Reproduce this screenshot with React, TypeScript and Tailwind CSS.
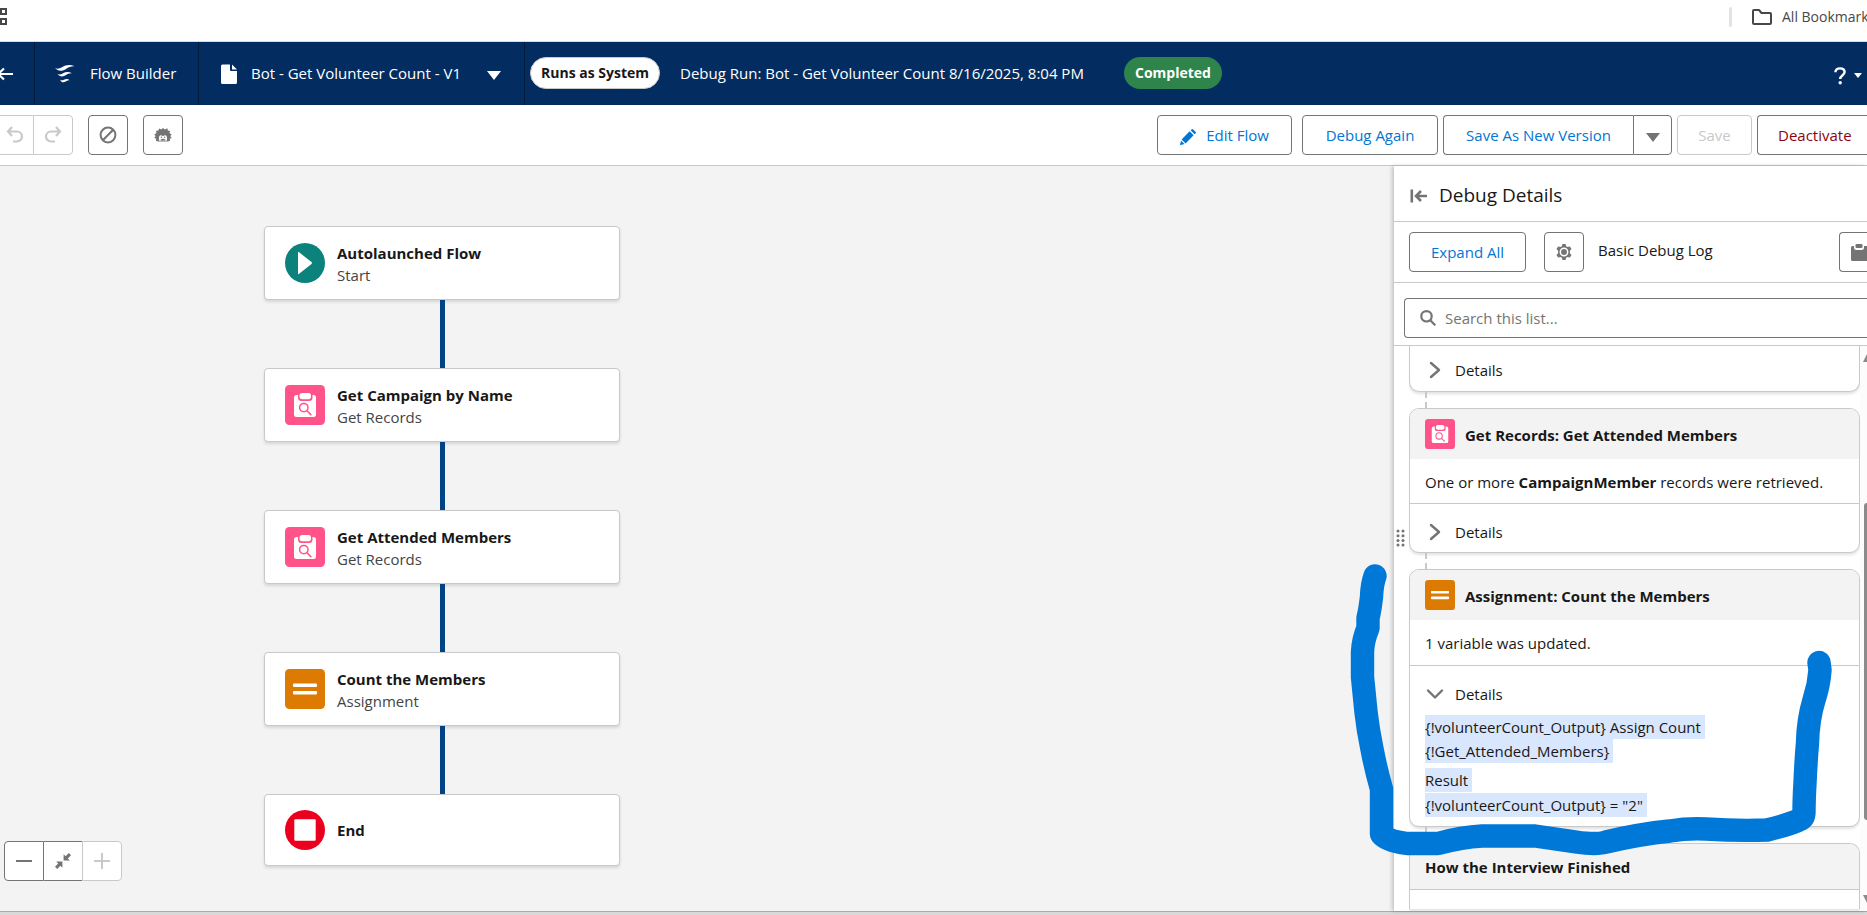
import type { ReactNode } from "react";

function SearchClipboard({ className }: { className: string }) {
  return (
    <svg viewBox="0 0 40 40" className={className} aria-hidden="true">
      <rect width="40" height="40" rx="4.5" fill="#ff538a" />
      <path d="M12 10h1v2.500a3.500 3.500 0 0 0 3.500 3.500h7.500a3.500 3.500 0 0 0 3.500-3.500V10h1a2.500 2.500 0 0 1 2.500 2.500v17a2.500 2.500 0 0 1-2.500 2.500h-17A2.500 2.500 0 0 1 9 29.500v-17A2.500 2.500 0 0 1 11.500 10z" fill="#fff" />
      <rect x="14.500" y="8" width="11.500" height="6.200" rx="2.600" fill="#fff" />
      <circle cx="18.800" cy="22.600" r="4.200" fill="none" stroke="#ff538a" strokeWidth="1.500" />
      <path d="M22 25.800l3.800 3.800" stroke="#ff538a" strokeWidth="1.600" strokeLinecap="round" />
    </svg>
  );
}

function AssignIcon({ className }: { className: string }) {
  return (
    <svg viewBox="0 0 40 40" className={className} aria-hidden="true">
      <rect width="40" height="40" rx="4.500" fill="#dd7a01" />
      <rect x="8" y="14.500" width="24" height="3.500" rx="1" fill="#fff" />
      <rect x="8" y="22" width="24" height="3.500" rx="1" fill="#fff" />
    </svg>
  );
}

function StartIcon() {
  return (
    <svg viewBox="0 0 40 40" className="size-10" aria-hidden="true">
      <circle cx="20" cy="20" r="20" fill="#0b827c" />
      <path d="M13 9.500q0-1 .8-.4l12.700 10q.9.900 0 1.800l-12.700 10q-.8.600-.8-.4z" fill="#fff" />
    </svg>
  );
}

function EndIcon() {
  return (
    <svg viewBox="0 0 40 40" className="size-10" aria-hidden="true">
      <circle cx="20" cy="20" r="20" fill="#ea001e" />
      <rect x="9.300" y="9.300" width="21.400" height="21.400" rx="1" fill="#fff" />
    </svg>
  );
}

function Chevron({ open }: { open?: boolean }) {
  return (
    <svg viewBox="0 0 18 18" className="size-[18px] shrink-0" fill="none" stroke="#747474" strokeWidth="2.400" strokeLinecap="round" strokeLinejoin="round" aria-hidden="true">
      <path d={open ? "M2 5.500l7 7 7-7" : "M5 2l8 7-8 7"} />
    </svg>
  );
}

function Node({ icon, title, sub, last }: { icon: ReactNode; title: string; sub?: string; last?: boolean }) {
  return (
    <>
      <div className={`flex w-[356px] items-center gap-3 rounded border border-[#c9c9c9] bg-white pl-5 shadow-[0_2px_3px_rgba(0,0,0,0.12)] ${last ? "h-[72px]" : "h-[74px]"}`}>
        {icon}
        <div className={`leading-[22px] ${last ? "" : "pt-0.5"}`}>
          <div className="font-bold text-[#181818]">{title}</div>
          {sub && <div className="text-[#444]">{sub}</div>}
        </div>
      </div>
      {!last && <div className="h-[68px] w-[5px] bg-[#014486]" />}
    </>
  );
}

const btn = "flex h-10 shrink-0 items-center justify-center border border-[#747474] bg-white whitespace-nowrap";

function Dash() {
  return <div className="ml-4 h-4 w-0 shrink-0 border-l-2 border-dashed border-[#c9c9c9]" />;
}

function Details({ open, compact }: { open?: boolean; compact?: boolean }) {
  return (
    <button type="button" aria-expanded={!!open} className={`flex w-full items-center gap-[11px] pl-4 text-left ${compact ? "h-12" : "h-12 pt-2"}`}>
      <Chevron open={open} />
      <span>Details</span>
    </button>
  );
}

const card = "shrink-0 overflow-hidden border border-[#c9c9c9] bg-white shadow-[0_2px_3px_rgba(0,0,0,0.12)]";
const mark = "bg-[#d8e6fe] box-decoration-clone py-0.5 pr-1";

export default function App() {
  return (
    <div className="flex h-screen flex-col overflow-hidden bg-white font-['Open_Sans','Segoe_UI',sans-serif] text-[15px] text-[#181818]">
      <div className="flex h-[42px] shrink-0 items-center justify-between border-b border-[#d3e0da] pb-2">
        <svg viewBox="0 0 8 18" className="h-[18px] w-2" fill="none" stroke="#474747" strokeWidth="2" aria-label="Apps">
          <rect x="1" y="1" width="5" height="5" />
          <rect x="1" y="11" width="5" height="5" />
        </svg>
        <div className="flex items-center overflow-hidden text-[14px] text-[#474747]">
          <div className="mr-5 h-5 w-[3px] rounded bg-[#e3e3e3]" />
          <svg viewBox="0 0 20 16" className="mr-2.5 h-4 w-5" fill="none" stroke="#474747" strokeWidth="2" strokeLinejoin="round" aria-hidden="true">
            <path d="M1 2q0-1 1-1h5l2.500 3H18q1 0 1 1v9q0 1-1 1H2q-1 0-1-1z" />
          </svg>
          <span className="w-[85px] overflow-hidden whitespace-nowrap">All Bookmarks</span>
        </div>
      </div>

      <header className="flex h-[63px] shrink-0 items-center bg-[#032d60] text-white">
        <button type="button" aria-label="Back" className="flex h-full w-[35px] items-center border-r border-[#011a3c]">
          <svg viewBox="0 0 14 16" className="h-4 w-3.5" fill="none" stroke="#fff" strokeWidth="2.200" aria-hidden="true">
            <path d="M13 8H-1M4 2.500L-2 8l6 5.500" />
          </svg>
        </button>
        <div className="flex h-full w-[164px] items-center gap-[15px] border-r border-[#011a3c] pl-5">
          <svg viewBox="0 0 20 20" className="size-5 shrink-0" fill="#fff" aria-hidden="true">
            <path d="M0 3.800C2 5.200 4 5 7 3.300C11 .6 15.500.3 19.500 2.300C16.500 1.900 14 3 11 5C7.500 7.500 2.500 7.500 0 3.800z" />
            <path d="M2.500 9.800c1.500 1 3.200.7 5.500-.6c3-1.700 6-1.700 9 .1c-2.500-.3-4 .5-6 1.800c-3 2-6.500 1.800-8.500-1.300z" />
            <path d="M5.200 15.800c1 .9 2.300.6 3.800-.1c2-1.100 4-1 5.700.5c-1.700-.2-2.700.5-4 1.300c-2 1.400-4.500 1.200-5.500-1.700z" />
          </svg>
          <span className="whitespace-nowrap">Flow Builder</span>
        </div>
        <button type="button" className="flex h-full w-[326px] shrink-0 items-center border-r border-[#011a3c] pr-[23px] pl-[22px] whitespace-nowrap">
          <svg viewBox="0 0 16 20" className="mr-3.5 h-5 w-4" fill="#fff" aria-hidden="true">
            <path d="M1.500 0.500H9V6q0 1 1 1h6v11.500q0 1.500-1.500 1.500h-13Q0 20 0 18.500V2Q0 .5 1.500.5zM11 .5L16 5.500H11z" />
          </svg>
          <span>Bot - Get Volunteer Count - V1</span>
          <svg viewBox="0 0 14 9" className="mt-1 ml-auto h-[9px] w-3.5" fill="#fff" aria-hidden="true">
            <path d="M0 0h14L7 9z" />
          </svg>
        </button>
        <span className="mb-0.5 ml-[5px] flex h-8 shrink-0 items-center rounded-full border border-[#c9c9c9] bg-white px-2.5 text-[14px] font-bold whitespace-nowrap text-[#181818]">Runs as System</span>
        <span className="ml-5 min-w-[419px] whitespace-nowrap">Debug Run: Bot - Get Volunteer Count 8/16/2025, 8:04 PM</span>
        <span className="mb-0.5 ml-[25px] flex h-8 shrink-0 items-center rounded-full bg-[#2e844a] px-[11px] text-[14px] font-bold">Completed</span>
        <button type="button" aria-label="Help" className="mr-[5px] ml-auto flex items-center gap-2 pt-1">
          <svg viewBox="0 0 12 18" className="h-[18px] w-3" aria-hidden="true">
            <path d="M1.400 5.200C1.400 2.800 3.300 1.400 6 1.400s4.600 1.500 4.600 3.700c0 2.900-4.400 3.500-4.400 6.900" fill="none" stroke="#fff" strokeWidth="2.400" />
            <circle cx="6.200" cy="15.700" r="1.700" fill="#fff" />
          </svg>
          <svg viewBox="0 0 8 5" className="h-[5px] w-2" fill="#fff" aria-hidden="true"><path d="M0 0h8L4 5z" /></svg>
        </button>
      </header>

      <div className="flex h-[61px] shrink-0 items-center border-b border-[#c9c9c9] text-[#0176d3]">
        <button type="button" disabled aria-label="Undo" className={`${btn} w-[33px] border-r-0 border-l-0 border-[#c9c9c9]! pr-1`}>
          <svg viewBox="0 0 18 18" className="size-[18px]" fill="none" stroke="#c9c9c9" strokeWidth="2.200" aria-hidden="true">
            <path d="M2 5.500h9a5 5 0 0 1 0 10H7M6 1L2 5.500 6 10" />
          </svg>
        </button>
        <button type="button" disabled aria-label="Redo" className={`${btn} w-10 rounded-r border-[#c9c9c9]!`}>
          <svg viewBox="0 0 18 18" className="size-[18px]" fill="none" stroke="#c9c9c9" strokeWidth="2.200" aria-hidden="true">
            <path d="M16 5.500H7a5 5 0 0 0 0 10h4M12 1l4 4.500L12 10" />
          </svg>
        </button>
        <button type="button" aria-label="Disable" className={`${btn} ml-[15px] w-10 rounded`}>
          <svg viewBox="0 0 18 18" className="size-[18px]" fill="none" stroke="#747474" strokeWidth="2" aria-hidden="true">
            <circle cx="9" cy="9" r="7.400" /><path d="M3.800 14.200L14.200 3.800" />
          </svg>
        </button>
        <button type="button" aria-label="Einstein" className={`${btn} ml-[15px] w-10 rounded`}>
          <svg viewBox="0 0 18 16" className="h-4 w-[18px]" aria-hidden="true">
            <path d="M5 1.500l2.300 1L9 1l1.800 1.500 2.600-1.200.4 2.300 2.400.5-.8 2 2.300 1.400-1.400 1.600 1.400 1.900-1.900.7.300 2.100-2.300.7H4.200l-2.300-.7.300-2.100-1.900-.7 1.400-1.900L.3 7.500l2.300-1.400-.8-2 2.600-.5z" fill="#747474" />
            <path d="M5.300 13.800C4.200 10 5.600 8.300 6.900 8.300L9 9l2.100-.7c1.300 0 2.700 1.700 1.600 5.500l-1.500.5-1-.9H7.800l-1 .9z" fill="#fff" />
            <path d="M6 13L9 11.600 12 13l-1 .8-2-.5-2 .5z" fill="#747474" />
            <circle cx="7.400" cy="10.300" r=".7" fill="#747474" /><circle cx="10.600" cy="10.300" r=".7" fill="#747474" />
          </svg>
        </button>
        <div className="ml-auto flex items-center">
          <button type="button" className={`${btn} w-[135px] gap-2.5 rounded`}>
            <svg viewBox="0 0 16 16" className="mt-1 size-4" fill="#0176d3" aria-hidden="true">
              <path d="M9.600 2.200l4 4-8 8.200-4-3.900zM10.600 1.300l.9-.9q.8-.8 1.700 0l2.300 2.300q.8.800 0 1.700l-.9.900zM1.100 11.700l3.400 3.300L.8 16q-.9.200-.7-.7z" />
            </svg>
            Edit Flow
          </button>
          <button type="button" className={`${btn} ml-2.5 w-[136px] rounded`}>Debug Again</button>
          <button type="button" className={`${btn} ml-[5px] w-[190px] rounded-l border-r-0`}>Save As New Version</button>
          <button type="button" aria-label="More save options" className={`${btn} w-[39px] rounded-r`}>
            <svg viewBox="0 0 14 9" className="mt-1 h-[9px] w-3.5" fill="#747474" aria-hidden="true"><path d="M0 0h14L7 9z" /></svg>
          </button>
          <button type="button" disabled className={`${btn} ml-[5px] w-[75px] rounded border-[#c9c9c9]! text-[#c9c9c9]`}>Save</button>
          <button type="button" className={`${btn} ml-[5px] w-[110px] justify-start! rounded-l border-r-0 pl-5 text-[#8e030f]`}>Deactivate</button>
        </div>
      </div>

      <div className="flex min-h-0 flex-1">
        <main className="flex min-w-0 flex-1 flex-col justify-between bg-[#f3f3f3]">
          <div className="ml-[264px] flex w-[356px] flex-col items-center pt-[60px]">
            <Node icon={<StartIcon />} title="Autolaunched Flow" sub="Start" />
            <Node icon={<SearchClipboard className="size-10" />} title="Get Campaign by Name" sub="Get Records" />
            <Node icon={<SearchClipboard className="size-10" />} title="Get Attended Members" sub="Get Records" />
            <Node icon={<AssignIcon className="size-10" />} title="Count the Members" sub="Assignment" />
            <Node icon={<EndIcon />} title="End" last />
          </div>
          <div className="-mt-[26px] mb-[30px] ml-1 flex">
            <button type="button" aria-label="Zoom out" className={`${btn} w-10 rounded-l`}>
              <svg viewBox="0 0 16 16" className="size-4" stroke="#747474" strokeWidth="2" aria-hidden="true"><path d="M0 8h16" /></svg>
            </button>
            <button type="button" aria-label="Fit to view" className={`${btn} w-[38px] border-r-0 border-l-0`}>
              <svg viewBox="0 0 16 16" className="size-4" fill="#747474" aria-hidden="true">
                <path d="M8.600 1.200v6.200h6.200l-2-2 3.200-3.200L13.800 0l-3.200 3.200zM7.400 14.800V8.600H1.200l2 2L0 13.800 2.200 16l3.200-3.200z" />
              </svg>
            </button>
            <button type="button" disabled aria-label="Zoom in" className={`${btn} w-10 rounded-r border-[#c9c9c9]!`}>
              <svg viewBox="0 0 16 16" className="size-4" stroke="#c9c9c9" strokeWidth="2" aria-hidden="true"><path d="M0 8h16M8 0v16" /></svg>
            </button>
          </div>
        </main>

        <aside className="relative flex w-[473px] shrink-0 flex-col bg-white shadow-[-2px_0_4px_rgba(0,0,0,0.2)]">
          <div className="flex h-14 shrink-0 items-center gap-3 border-b border-[#c9c9c9] pt-1 pl-4">
            <svg viewBox="0 0 17 14" className="h-3.5 w-[17px]" fill="none" stroke="#747474" strokeWidth="2.600" aria-hidden="true">
              <path d="M1.800.5v13M17 7H6M11 2L6 7l5 5" />
            </svg>
            <h2 className="text-[19px]">Debug Details</h2>
          </div>
          <div className="flex h-[61px] shrink-0 items-center border-b border-[#c9c9c9] pl-[15px]">
            <button type="button" className={`${btn} w-[117px] rounded text-[#0176d3]`}>Expand All</button>
            <button type="button" aria-label="Settings" className={`${btn} ml-[18px] w-10 rounded`}>
              <svg viewBox="0 0 16 16" className="size-4" aria-hidden="true">
                <path d="M6.400 0h3.200l.5 2.200 1.600.9 2.200-.7 1.600 2.700L13.900 6.700v2.600l1.600 1.600-1.600 2.700-2.200-.7-1.600.9-.5 2.200H6.400l-.5-2.200-1.600-.9-2.200.7L.5 10.900l1.600-1.600V6.700L.5 5.100l1.600-2.700 2.200.7 1.600-.9z" fill="#747474" />
                <circle cx="8" cy="8" r="3.700" fill="none" stroke="#fff" strokeWidth="1.500" />
              </svg>
            </button>
            <span className="ml-3.5 pb-1">Basic Debug Log</span>
            <button type="button" aria-label="Copy" className={`${btn} ml-auto w-7 justify-end! overflow-hidden rounded-l border-r-0`}>
              <svg viewBox="0 0 16 17" className="h-[17px] w-4" fill="#747474" aria-hidden="true">
                <path d="M1.500 2H3v1.500Q3 6 5.500 6h5Q13 6 13 3.500V2h3v15H1.500Q0 17 0 15.500v-12Q0 2 1.500 2z" />
                <rect x="4.500" y="0" width="7" height="4" rx="1.300" />
              </svg>
            </button>
          </div>
          <div className="flex h-[63px] shrink-0 items-center border-b border-[#c9c9c9] pt-2 pl-2.5">
            <label className="flex h-10 flex-1 items-center gap-[9px] rounded-l border border-r-0 border-[#747474] pl-[15px]">
              <svg viewBox="0 0 16 16" className="size-4 shrink-0" fill="none" stroke="#747474" strokeWidth="2.200" aria-hidden="true">
                <circle cx="6.500" cy="6.300" r="5.200" /><path d="M10.200 10.200L15.300 15.300" />
              </svg>
              <input type="text" aria-label="Search this list" placeholder="Search this list..." className="w-full bg-transparent outline-none placeholder:text-[#747474]" />
            </label>
          </div>

          <div className="flex min-h-0 flex-1">
            <div className="flex w-[15px] shrink-0 flex-col items-start justify-center pb-[182px] pl-0.5">
              <svg viewBox="0 0 9 18" className="h-[18px] w-[9px]" fill="#747474" aria-hidden="true">
                {[2, 6.700, 11.400, 16.100].map((y) => (
                  <g key={y}><circle cx="2" cy={y} r="1.500" /><circle cx="7" cy={y} r="1.500" /></g>
                ))}
              </svg>
            </div>
            <div className="flex min-h-0 min-w-0 flex-1 flex-col overflow-hidden">
              <section className={`${card} h-[46px] rounded-b-[10px] border-t-0`}>
                <Details compact />
              </section>
              <Dash />
              <section className={`${card} h-[145px] rounded-[10px]`}>
                <h3 className="flex h-[50px] items-center gap-2.5 bg-[#f3f3f3] pl-[15px] font-bold">
                  <SearchClipboard className="size-[30px]" />
                  <span className="pt-0.5">Get Records: Get Attended Members</span>
                </h3>
                <p className="flex h-[45px] items-center border-b border-[#c9c9c9] pt-0.5 pl-[15px] whitespace-pre">One or more <b>CampaignMember</b> records were retrieved.</p>
                <Details />
              </section>
              <Dash />
              <section className={`${card} h-[258px] rounded-[10px]`}>
                <h3 className="flex h-[50px] items-center gap-2.5 bg-[#f3f3f3] pl-[15px] font-bold">
                  <AssignIcon className="size-[30px]" />
                  <span className="pt-0.5">Assignment: Count the Members</span>
                </h3>
                <p className="flex h-[46px] items-center border-b border-[#c9c9c9] pt-0.5 pl-[15px]">1 variable was updated.</p>
                <Details open />
                <div className="pl-[15px] leading-6">
                  <p className="pt-px"><span className={mark}>{"{!volunteerCount_Output} Assign Count"}</span></p>
                  <p><span className={mark}>{"{!Get_Attended_Members}"}</span></p>
                  <p className="mt-[5px]"><span className={mark}>Result</span></p>
                  <p className="pt-px"><span className={mark}>{"{!volunteerCount_Output} = \"2\""}</span></p>
                </div>
              </section>
              <Dash />
              <section className={`${card} h-[66px] rounded-t-[10px] border-b-0`}>
                <h3 className="flex h-[46px] items-center border-b border-[#c9c9c9] bg-[#f3f3f3] pt-0.5 pl-[15px] font-bold">How the Interview Finished</h3>
              </section>
            </div>
            <div className="flex w-[7px] shrink-0 flex-col items-end overflow-hidden bg-[#fcfcfc]">
              <svg viewBox="0 0 4 8" className="mt-2 h-2 w-1" fill="#8b8b8b" aria-hidden="true"><path d="M4 0v8H0z" /></svg>
              <div className="mt-[141px] h-[317px] w-[3px] rounded-l bg-[#8b8b8b]" />
              <svg viewBox="0 0 4 8" className="mt-auto mb-2 h-2 w-1" fill="#8b8b8b" aria-hidden="true"><path d="M0 0h4v8z" /></svg>
            </div>
          </div>

          <svg viewBox="0 0 473 745" className="pointer-events-none absolute top-0 left-0 h-[745px] w-[473px] overflow-visible" fill="none" stroke="#0078d7" strokeWidth="23.400" strokeLinecap="round" strokeLinejoin="round" aria-hidden="true">
            <path transform="translate(-1394 -166)" d="M1375 576Q1372 584 1371.500 597Q1370 610 1368 618L1368 628Q1363 640 1362.500 652L1362.500 677L1366 712Q1368 730 1372 749Q1376 770 1381.500 789L1381.500 834Q1387 841 1407 843.500H1438Q1462 837 1482 836H1535Q1555 839 1576 842T1606 842Q1640 834 1670 831Q1688 828 1706 829Q1737 831 1767 830Q1788 825 1799 820Q1804 818 1804 812Q1804 800 1805 783Q1806 760 1807.500 743Q1808 720 1814 700Q1819 685 1820 670L1819 662.500" />
          </svg>
        </aside>
      </div>
      <div className="h-1 shrink-0 border-t border-[#ababab] bg-[#d9d9d9]" />
    </div>
  );
}
